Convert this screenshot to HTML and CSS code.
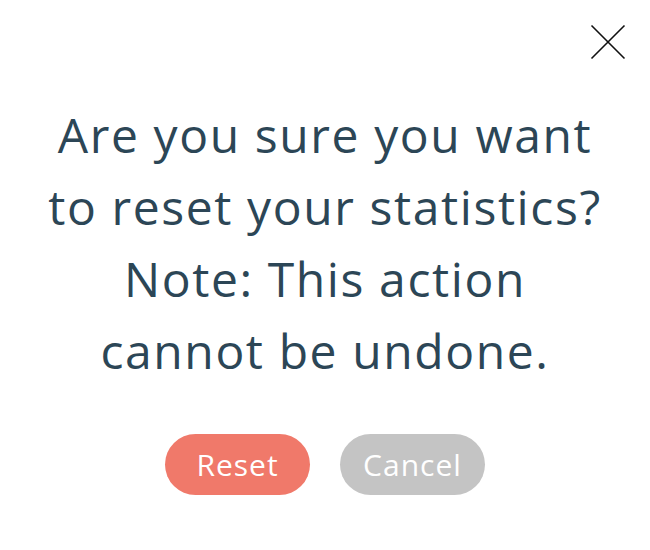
FILE: index.html
```html
<!DOCTYPE html>
<html lang="en">
<head>
<meta charset="utf-8">
<title>Reset statistics</title>
<link rel="stylesheet" href="styles.css">
</head>
<body>
<div class="modal">
  <div class="modal-head">
    <button class="close" aria-label="Close">
      <svg width="36" height="36" viewBox="0 0 36 36"><path d="M1.5 1.5 L34.5 34.5 M34.5 1.5 L1.5 34.5" stroke="#111" stroke-width="1.6" fill="none"/></svg>
    </button>
  </div>
  <p class="message">Are you sure you want<br>to reset your statistics?<br>Note: This action<br>cannot be undone.</p>
  <div class="actions">
    <button class="btn btn-reset">Reset</button>
    <button class="btn btn-cancel">Cancel</button>
  </div>
</div>
</body>
</html>
```
FILE: styles.css
```css
* { box-sizing: border-box; }
html, body { margin: 0; padding: 0; background: #fff; }
body { font-family: "Open Sans", "DejaVu Sans", sans-serif; }
.modal {
  width: 650px;
  height: 550px;
  display: flex;
  flex-direction: column;
  align-items: center;
}
.modal-head {
  align-self: stretch;
  display: flex;
  justify-content: flex-end;
  padding: 24px 24px 0 0;
}
.close {
  background: none;
  border: 0;
  padding: 0;
  width: 36px;
  height: 36px;
  cursor: pointer;
}
.close svg { display: block; }
.message {
  margin: 39px 0 0;
  color: #2c4656;
  font-size: 48px;
  line-height: 72px;
  text-align: center;
  letter-spacing: 1.6px;
  white-space: nowrap;
}
.actions {
  display: flex;
  gap: 30px;
  margin-top: 47px;
}
.btn {
  width: 145px;
  height: 61px;
  border: 0;
  border-radius: 31px;
  color: #fff;
  font-family: inherit;
  font-size: 30px;
  letter-spacing: 1px;
  cursor: pointer;
}
.btn-reset { background: #f0796a; }
.btn-cancel { background: #c4c4c4; }
```
